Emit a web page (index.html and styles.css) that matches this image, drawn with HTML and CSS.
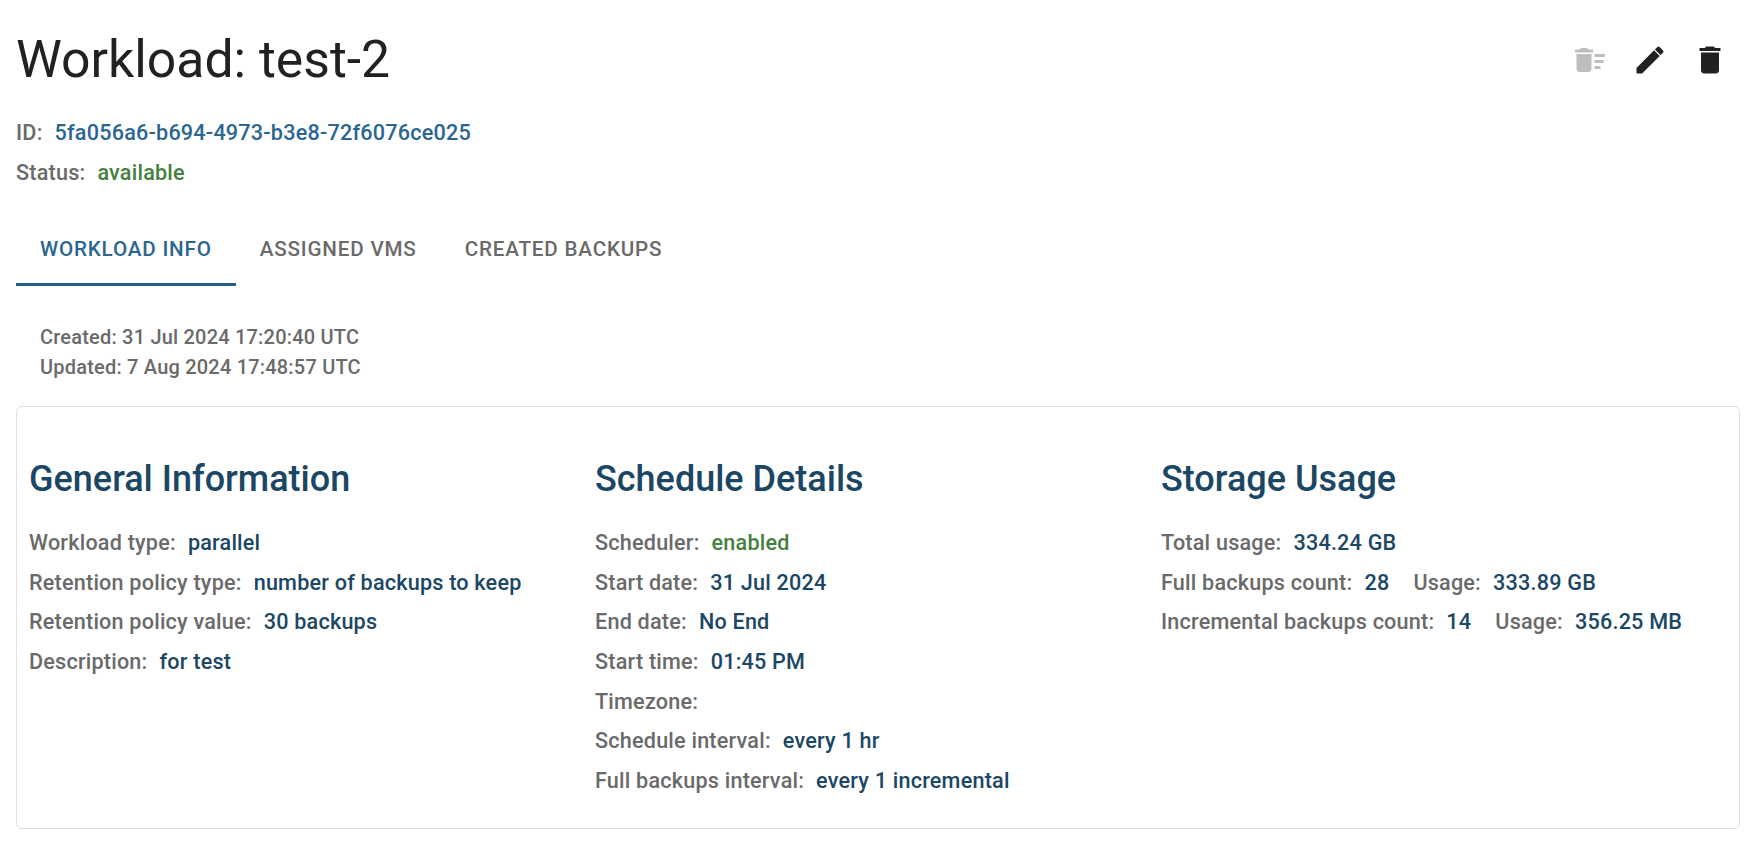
FILE: index.html
```html
<!DOCTYPE html>
<html lang="en">
<head>
<meta charset="utf-8">
<title>Workload: test-2</title>
<link rel="stylesheet" href="styles.css">
</head>
<body>
<main class="page">
  <header class="head">
    <h1 class="title">Workload: test-2</h1>
    <div class="actions">
      <button class="icon-btn disabled" aria-label="Delete backups">
        <svg viewBox="0 0 24 24"><path d="M15 16h4v2h-4zm0-8h7v2h-7zm0 4h6v2h-6zM3 18c0 1.100.9 2 2 2h6c1.100 0 2-.9 2-2V8H3v10zM14 5h-3l-1-1H6L5 5H2v2h12z"/></svg>
      </button>
      <button class="icon-btn" aria-label="Edit">
        <svg viewBox="0 0 24 24"><path d="M3 17.460v3.040c0 .28.22.5.5.5h3.040c.13 0 .26-.05.35-.15L18.460 9.290l-3.750-3.750L3.150 17.100c-.1.1-.15.22-.15.360zM20.710 7.040a1 1 0 0 0 0-1.410l-2.340-2.340a1 1 0 0 0-1.410 0l-1.680 1.680 3.750 3.750 1.680-1.680z"/></svg>
      </button>
      <button class="icon-btn" aria-label="Delete">
        <svg viewBox="0 0 24 24"><path d="M6 19c0 1.100.9 2 2 2h8c1.100 0 2-.9 2-2V7H6v12zM19 4h-3.500l-1-1h-5l-1 1H5v2h14V4z"/></svg>
      </button>
    </div>
  </header>
  <p class="meta"><span class="label">ID:</span><span class="v-blue">5fa056a6-b694-4973-b3e8-72f6076ce025</span></p>
  <p class="meta"><span class="label">Status:</span><span class="v-green">available</span></p>

  <nav class="tabs">
    <a class="tab active">Workload Info</a>
    <a class="tab">Assigned VMs</a>
    <a class="tab">Created Backups</a>
  </nav>

  <div class="times">
    <div>Created: 31 Jul 2024 17:20:40 UTC</div>
    <div>Updated: 7 Aug 2024 17:48:57 UTC</div>
  </div>

  <section class="card">
    <div class="col">
      <h2>General Information</h2>
      <p class="row"><span class="label">Workload type:</span><span class="val">parallel</span></p>
      <p class="row"><span class="label">Retention policy type:</span><span class="val">number of backups to keep</span></p>
      <p class="row"><span class="label">Retention policy value:</span><span class="val">30 backups</span></p>
      <p class="row"><span class="label">Description:</span><span class="val">for test</span></p>
    </div>
    <div class="col">
      <h2>Schedule Details</h2>
      <p class="row"><span class="label">Scheduler:</span><span class="v-green">enabled</span></p>
      <p class="row"><span class="label">Start date:</span><span class="val">31 Jul 2024</span></p>
      <p class="row"><span class="label">End date:</span><span class="val">No End</span></p>
      <p class="row"><span class="label">Start time:</span><span class="val">01:45 PM</span></p>
      <p class="row"><span class="label">Timezone:</span><span class="val"></span></p>
      <p class="row"><span class="label">Schedule interval:</span><span class="val">every 1 hr</span></p>
      <p class="row"><span class="label">Full backups interval:</span><span class="val">every 1 incremental</span></p>
    </div>
    <div class="col">
      <h2>Storage Usage</h2>
      <p class="row"><span class="label">Total usage:</span><span class="val">334.24 GB</span></p>
      <p class="row"><span class="label">Full backups count:</span><span class="val pad">28</span><span class="label">Usage:</span><span class="val">333.89 GB</span></p>
      <p class="row"><span class="label">Incremental backups count:</span><span class="val pad">14</span><span class="label">Usage:</span><span class="val">356.25 MB</span></p>
    </div>
  </section>
</main>
</body>
</html>
```
FILE: styles.css
```css
* { box-sizing: border-box; }
html, body { margin: 0; background: #fff; }
body { font-family: Roboto, sans-serif; color: #212121; }
.page { padding: 24px 12px 0 16px; }
.head { display: flex; justify-content: space-between; align-items: center; height: 72px; margin-bottom: 16px; }
.title { margin: 0; font-size: 51.7px; font-weight: 400; line-height: 74px; }
.actions { display: flex; align-items: center; }
.icon-btn { width: 60px; height: 60px; padding: 0; border: 0; background: none; display: flex; align-items: center; justify-content: center; fill: #212121; }
.icon-btn svg { width: 36px; height: 36px; }
.icon-btn.disabled { fill: #bdbdbd; }
.meta { margin: 0; height: 40px; display: flex; align-items: center; font-size: 21.6px; letter-spacing: .21px; }
.label { color: #6a6a6a; font-weight: 500; margin-right: 12px; }
.v-blue { color: #2a6690; font-weight: 500; }
.v-green { color: #447f3f; font-weight: 500; }
.val { color: #1b4765; font-weight: 500; }
.val.pad { margin-right: 24px; }
.tabs { display: flex; margin-top: 23px; }
.tab { padding: 0 24px; height: 71px; display: flex; align-items: center; font-size: 20.65px; font-weight: 500; letter-spacing: .8px; text-transform: uppercase; color: #6a6a6a; border-bottom: 3px solid transparent; }
.tab.active { color: #2a6690; border-bottom-color: #256089; }
.times { padding: 36px 24px 0; font-size: 20px; font-weight: 500; color: #6a6a6a; line-height: 30px; letter-spacing: .2px; }
.card { margin-top: 24px; width: 1724px; height: 423px; border: 1px solid #e0e0e0; border-radius: 6px; padding: 40px 12px 0; display: grid; grid-template-columns: repeat(3, 1fr); }
.col h2 { margin: 0 0 12px; font-size: 36px; font-weight: 500; line-height: 64px; color: #1b4765; }
.row { margin: 0; height: 39.6px; display: flex; align-items: center; font-size: 21.6px; letter-spacing: .21px; }
```
